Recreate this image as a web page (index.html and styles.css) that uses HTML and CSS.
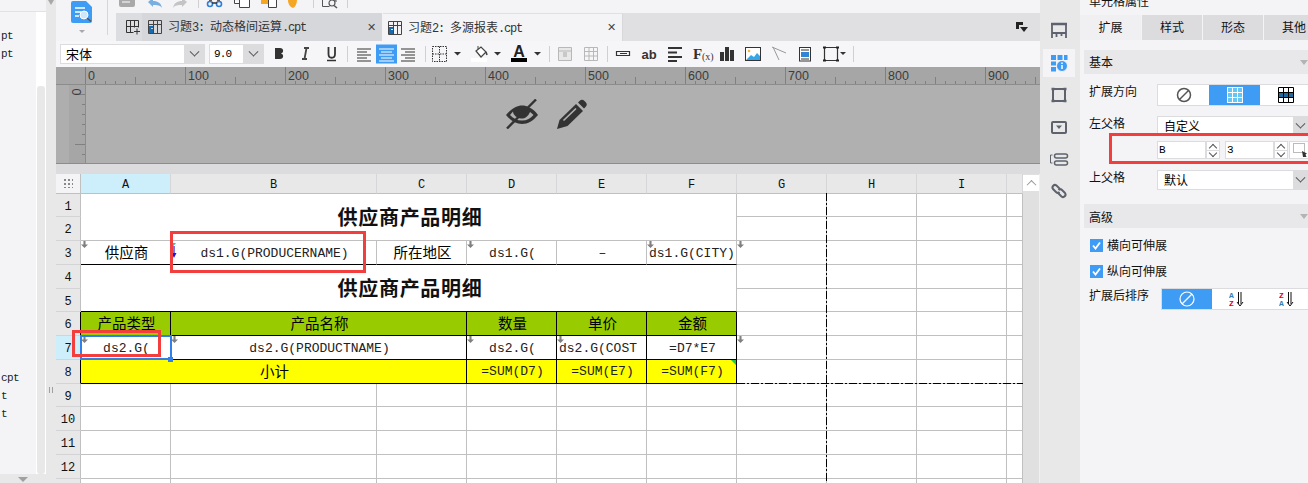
FILE: index.html
```html
<!DOCTYPE html>
<html lang="zh">
<head>
<meta charset="utf-8">
<title>报表设计器</title>
<link rel="stylesheet" href="styles.css">
</head>
<body>
<div class="app">
  <aside class="left">
    <div class="left-top"></div>
    <div class="left-body">
      <ul class="files">
        <li>pt</li><li>pt</li><li class="far">cpt</li><li>t</li><li>t</li>
      </ul>
      <div class="left-scroll"><div class="left-thumb"></div></div>
    </div>
    <div class="left-foot"><span class="tri-down"></span></div>
  </aside>
  <div class="gutter"><span class="tri-up"></span><span class="grip"></span></div>

  <main class="main">
    <header class="top">
      <div class="logo-block">
        <svg width="60" height="41" viewBox="56 0 60 41">
          <path d="M73 1h13l6 6v14a2 2 0 0 1-2 2H73a2 2 0 0 1-2-2V3a2 2 0 0 1 2-2z" fill="#3f9cf5"/>
          <path d="M75 8h10M75 12h6M75 16h4" stroke="#fff" stroke-width="1.3"/>
          <circle cx="84" cy="15" r="4" fill="#cfe6fb" stroke="#fff"/>
          <path d="M87 18l4 3.500" stroke="#555" stroke-width="1.500"/>
          <path d="M79 30h6l-3 3z" fill="#a8a8a8"/>
          <path d="M107.500 0v35" stroke="#d6d6d8"/>
        </svg>
      </div>
      <div class="top-right">
        <svg class="quick" width="300" height="13" viewBox="116 0 300 13">
          <path d="M119 0h16v5a2 2 0 0 1-2 2h-12a2 2 0 0 1-2-2z" fill="#a9a9a9"/><path d="M122 2h8" stroke="#fff"/>
          <path d="M148 2l5-4v3c5 0 8 2 9 7-2-3-5-3-9-3v2z" fill="#79aee0"/>
          <path d="M187 2l-5-4v3c-5 0-8 2-9 7 2-3 5-3 9-3v2z" fill="#c4c4c4"/>
          <path d="M198.500 0v8" stroke="#d0d0d2"/>
          <circle cx="210" cy="4" r="2.500" fill="none" stroke="#2f7ed8" stroke-width="1.600"/>
          <circle cx="219" cy="4" r="2.500" fill="none" stroke="#2f7ed8" stroke-width="1.600"/>
          <path d="M209 0h3M217 0h3M212 3h5" stroke="#333" stroke-width="1.500"/>
          <path d="M234.500 0v3.500h5M239.500 0v7.500h10V0" fill="#fff" stroke="#444"/>
          <rect x="261" y="0" width="7" height="4" fill="#f5a623"/><path d="M268.500 0v7.500h8V0" fill="#fff" stroke="#444"/>
          <path d="M288 0h9c0 4-2 7-4 8-3-1-5-4-5-8z" fill="#f5a623"/>
          <path d="M313.500 0v8" stroke="#d0d0d2"/>
          <path d="M322.500 0v6.500h7M333 0h3v2" fill="none" stroke="#555"/><circle cx="332" cy="3" r="3" fill="none" stroke="#555" stroke-width="1.200"/><path d="M334 5.500l3 2.500" stroke="#555" stroke-width="1.500"/>
          <path d="M347.500 0v8" stroke="#d0d0d2"/>
        </svg>
        <nav class="tabbar">
          <div class="tab-add">
            <svg width="16" height="16" viewBox="0 0 16 16"><path d="M1.500 1.500h12M1.500 1.500v12h7M5.500 1.500v12M9.500 1.500v7M13.500 1.500v7M1.500 7.500h12M9 12.500h6M12 9.500v6" fill="none" stroke="#333"/></svg>
          </div>
          <div class="tab tab-off">
            <svg class="tab-ico" width="14" height="14" viewBox="0 0 14 14"><path d="M.5.5h13v13H.5zM.5 4.500h13M5.500.5v13M9.500.5v13" fill="none" stroke="#444"/><path d="M1 6h4v2H3v1h2v4H1z" fill="#1769b0"/></svg>
            <span class="tab-text">习题<span class="hw">3: </span>动态格间运算<span class="hw">.cpt</span></span>
            <span class="tab-x">✕</span>
          </div>
          <div class="tab tab-on">
            <svg class="tab-ico" width="14" height="14" viewBox="0 0 14 14"><path d="M.5.5h13v13H.5zM.5 4.500h13M5.500.5v13M9.500.5v13" fill="none" stroke="#444"/><path d="M1 6h4v2H3v1h2v4H1z" fill="#1769b0"/></svg>
            <span class="tab-text">习题<span class="hw">2: </span>多源报表<span class="hw">.cpt</span></span>
            <span class="tab-x">✕</span>
          </div>
          <div class="tab-rest">
            <svg width="12" height="11" viewBox="0 0 12 11"><path d="M0 0h7v3H3v4H0z" fill="#222"/><path d="M4 5h8l-4 5z" fill="#222"/></svg>
          </div>
        </nav>
      </div>
    </header>

    <div class="format">
      <div class="combo combo-font"><span class="combo-val">宋体</span><span class="combo-arrow"><b class="chev"></b></span></div>
      <div class="combo combo-size"><span class="combo-val mono">9.0</span><span class="combo-arrow"><b class="chev"></b></span></div>
      <svg class="fmt-svg" width="90" height="26" viewBox="264 41 90 26">
        <path d="M275 48h5c4 0 4 5 1 5.500 3 .5 3 5.500-1 5.500h-5z" fill="#333"/>
        <path d="M304 48h5M302 59h5M306.500 48l-2 11" stroke="#444" stroke-width="1.800" fill="none"/>
        <path d="M328.500 47v7c0 5 6.500 5 6.500 0v-7" fill="none" stroke="#333" stroke-width="1.800"/><path d="M327 60.500h9" stroke="#333" stroke-width="1.500"/>
        <path d="M347.500 46v16" stroke="#d0d0d2"/>
      </svg>
      <svg class="fmt-svg" width="72" height="26" viewBox="354 41 72 26">
        <rect x="376" y="44.500" width="21" height="19" fill="#3f9cf5"/>
        <path d="M357 49h14M357 52h10M357 55h14M357 58h10M357 61h14" stroke="#333" stroke-width="1.100"/>
        <path d="M379 49h15M381 52h11M379 55h15M381 58h11M379 61h15" stroke="#fff" stroke-width="1.100"/>
        <path d="M401 49h14M405 52h10M401 55h14M405 58h10M401 61h14" stroke="#333" stroke-width="1.100"/>
        <path d="M425.500 46v16" stroke="#d0d0d2"/>
      </svg>
      <svg class="fmt-svg" width="434" height="26" viewBox="426 41 434 26">
        <path d="M432.500 46.500h14v15h-14zM432.500 54h14M439.500 46.500v15" fill="none" stroke="#333" stroke-dasharray="1.500 1"/>
        <path d="M454 52h7l-3.500 3.500z" fill="#333"/>
        <path d="M476 51l5-4 5 5-5 5z" fill="#fff" stroke="#444" stroke-width="1.200"/><path d="M478 49v-3" stroke="#444"/><path d="M486 52l1 3" stroke="#444" stroke-width="1.600"/>
        <rect x="471" y="58" width="16" height="4" fill="#fff"/>
        <path d="M494 52h7l-3.500 3.500z" fill="#333"/>
        <text x="519" y="57" class="svg-a">A</text><rect x="511" y="58" width="16" height="4" fill="#000"/>
        <path d="M534 52h7l-3.500 3.500z" fill="#333"/>
        <path d="M549.500 46v16" stroke="#d0d0d2"/>
        <path d="M558.500 47.500h13v13h-13z" fill="#e8e8e8" stroke="#b8b8b8"/><path d="M559 51h12" stroke="#b8b8b8"/><rect x="563" y="52" width="4" height="5" fill="#c8c8c8"/>
        <path d="M584.500 47.500h13v13h-13zM584.500 51.500h13M584.500 56h13M589 47.500v13M593.500 47.500v13" fill="none" stroke="#b8b8b8"/>
        <path d="M607.500 46v16" stroke="#d0d0d2"/>
        <path d="M616.500 51.500h13v4h-13zM620 53.500h7" fill="none" stroke="#333" stroke-width="1.200"/>
        <text x="649" y="59" class="svg-ab">ab</text>
        <path d="M668 48h14M668 52.500h9M668 57h14M668 61h9" stroke="#333" stroke-width="2"/>
        <text x="693" y="59" class="svg-f">F</text><text x="702" y="60" class="svg-x">(x)</text>
        <path d="M720 52h4v9h-4zM725 47h4v14h-4zM730 50h4v11h-4z" fill="#333"/>
        <rect x="745.500" y="47.500" width="15" height="13" fill="#fff" stroke="#333"/><path d="M746 60l5-5 3 2 3-4 3 3v4z" fill="#35a7e8"/><circle cx="749" cy="51" r="1.300" fill="#f5b942"/>
        <path d="M772 47l14 6M773 47l6 13" stroke="#999" fill="none"/>
        <rect x="799.500" y="47.500" width="11" height="13.500" fill="#fff" stroke="#333"/><path d="M801 50h8" stroke="#333"/><rect x="801" y="52" width="8" height="5" fill="#2f86d6"/><path d="M801 59h8" stroke="#333"/>
        <path d="M824.500 47.500h13v13h-13z" fill="none" stroke="#333" stroke-width="1.200"/><path d="M823 47.500h3M836 47.500h3M823 60.500h3M836 60.500h3" stroke="#222" stroke-width="2"/>
        <path d="M840 52h6l-3 3z" fill="#333"/>
        <path d="M853.500 46v16" stroke="#d0d0d2"/>
      </svg>
    </div>

    <div class="ruler">
      <div class="ruler-corner"></div>
      <div class="ruler-track">
        <span>0</span><span>100</span><span>200</span><span>300</span><span>400</span><span>500</span><span>600</span><span>700</span><span>800</span><span>900</span>
      </div>
    </div>

    <section class="design">
      <div class="design-strip"></div>
      <div class="vruler"><span class="vruler-zero">0</span></div>
      <div class="design-body">
        <svg width="33" height="30" viewBox="0 0 33 30">
          <path d="M0 16C6 9 11 6.500 16 6.500S27 9 32 16c-5 6-10 9-16 9S5 22 0 16zm4 0c3 3.500 7 5.500 12 5.500 5 0 8.500-2 11.500-5.500-1-1-2-2-3.500-3-2 5-6 7-9 6.500C11 19 7 16 7 12.500 6 13.500 5 15 4 16z" fill="#333"/>
          <path d="M1 29.500L30 .5" stroke="#333" stroke-width="2.400"/>
        </svg>
        <svg width="31" height="30" viewBox="0 0 31 30">
          <path d="M0 30l2.500-9L19 5l7 7-15.500 15z" fill="#333"/>
          <path d="M21 3.500l1.500-1.500a3.500 3.500 0 0 1 5 0l1 1a3.500 3.500 0 0 1 0 5L27 9.500z" fill="#333"/>
          <path d="M6.500 21.500L19 9.500" stroke="#b0b0b0" stroke-width="1.700"/>
        </svg>
      </div>
    </section>

    <div class="band"></div>

    <section class="sheet-wrap">
      <div class="sheet">
        <div class="corner"><span class="dots"></span></div>
        <div class="ch ch-sel">A</div><div class="ch">B</div><div class="ch">C</div><div class="ch">D</div><div class="ch">E</div><div class="ch">F</div><div class="ch">G</div><div class="ch">H</div><div class="ch">I</div><div class="ch"></div>

        <div class="rh">1</div>
        <div class="c merged-title">供应商产品明细</div>
        <div class="c"></div><div class="c"></div><div class="c"></div><div class="c"></div>
        <div class="rh">2</div>
        <div class="c"></div><div class="c"></div><div class="c"></div><div class="c"></div>

        <div class="rh">3</div>
        <div class="c btm cjk"><i class="mk"></i>供应商</div>
        <div class="c btm"><svg class="mk-blue" width="6" height="16" viewBox="0 0 6 16"><path d="M0 0h5L2.500 3z" fill="#22c8a0"/><path d="M3 3v9" stroke="#1a1ae0" stroke-width="1.200"/><path d="M.5 10h5L3 15z" fill="#1a1ae0"/></svg>ds1.G(PRODUCERNAME)</div>
        <div class="c btm cjk">所在地区</div>
        <div class="c btm"><i class="mk"></i>ds1.G(</div>
        <div class="c btm">–</div>
        <div class="c btm clip"><i class="mk"></i>ds1.G(CITY)</div>
        <div class="c"><i class="mk"></i></div><div class="c"></div><div class="c"></div><div class="c"></div>

        <div class="rh">4</div>
        <div class="c merged-title blk">供应商产品明细</div>
        <div class="c"></div><div class="c"></div><div class="c"></div><div class="c"></div>
        <div class="rh">5</div>
        <div class="c"></div><div class="c"></div><div class="c"></div><div class="c"></div>

        <div class="rh rh-b">6</div>
        <div class="c k green cjk">产品类型</div>
        <div class="c k green cjk span2">产品名称</div>
        <div class="c k green cjk">数量</div>
        <div class="c k green cjk">单价</div>
        <div class="c k green cjk">金额</div>
        <div class="c"></div><div class="c"></div><div class="c"></div><div class="c"></div>

        <div class="rh rh-b rh-sel">7</div>
        <div class="c k"><i class="mk"></i>ds2.G(</div>
        <div class="c k span2"><i class="mk"></i>ds2.G(PRODUCTNAME)</div>
        <div class="c k"><i class="mk"></i>ds2.G(</div>
        <div class="c k clip"><i class="mk"></i>ds2.G(COST</div>
        <div class="c k">=D7*E7</div>
        <div class="c"><i class="mk"></i></div><div class="c"></div><div class="c"></div><div class="c"></div>

        <div class="rh rh-b">8</div>
        <div class="c k yellow cjk span3">小计</div>
        <div class="c k yellow">=SUM(D7)</div>
        <div class="c k yellow">=SUM(E7)</div>
        <div class="c k yellow"><i class="flag"></i>=SUM(F7)</div>
        <div class="c"></div><div class="c"></div><div class="c"></div><div class="c"></div>

        <div class="rh">9</div><div class="c"></div><div class="c"></div><div class="c"></div><div class="c"></div><div class="c"></div><div class="c"></div><div class="c"></div><div class="c"></div><div class="c"></div><div class="c"></div>
        <div class="rh">10</div><div class="c"></div><div class="c"></div><div class="c"></div><div class="c"></div><div class="c"></div><div class="c"></div><div class="c"></div><div class="c"></div><div class="c"></div><div class="c"></div>
        <div class="rh">11</div><div class="c"></div><div class="c"></div><div class="c"></div><div class="c"></div><div class="c"></div><div class="c"></div><div class="c"></div><div class="c"></div><div class="c"></div><div class="c"></div>
        <div class="rh">12</div><div class="c"></div><div class="c"></div><div class="c"></div><div class="c"></div><div class="c"></div><div class="c"></div><div class="c"></div><div class="c"></div><div class="c"></div><div class="c"></div>
        <div class="rh"></div><div class="c"></div><div class="c"></div><div class="c"></div><div class="c"></div><div class="c"></div><div class="c"></div><div class="c"></div><div class="c"></div><div class="c"></div><div class="c"></div>

        <div class="page-v"></div>
        <div class="page-h"></div>
        <div class="selection"><i class="handle"></i></div>
        <div class="red red-a"></div>
        <div class="red red-b"></div>
      </div>
      <div class="vscroll"><div class="vscroll-up"><b class="chev-up"></b></div></div>
    </section>
  </main>

  <nav class="rail">
    <svg width="40" height="210" viewBox="1040 0 40 210">
      <path d="M1052 24h14v9h-14zM1052 33v5M1056.500 33v4M1061.500 33v3M1066 33v5" fill="none" stroke="#5d626e" stroke-width="1.800"/>
      <path d="M1051 24h16" stroke="#5d626e" stroke-width="2.500"/>
      <rect x="1043" y="49" width="32" height="28" fill="#f4f4f7"/>
      <g fill="#3f9cf5"><rect x="1051" y="55" width="5" height="5"/><rect x="1057.500" y="55" width="5" height="5"/><rect x="1064" y="55" width="3.500" height="5"/><rect x="1051" y="61.500" width="5" height="4"/><rect x="1051" y="67" width="5" height="4.500"/></g>
      <circle cx="1062" cy="66" r="5.500" fill="#3f9cf5" stroke="#f4f4f7"/><path d="M1062 65v4M1062 62.500v1.500" stroke="#fff" stroke-width="1.500"/>
      <path d="M1053 89h12v12h-12z" fill="none" stroke="#5d626e" stroke-width="2"/><path d="M1051.500 89h3M1063.500 89h3M1051.500 101h3M1063.500 101h3" stroke="#5d626e" stroke-width="2.500"/>
      <rect x="1052" y="122" width="14" height="11" rx="1" fill="none" stroke="#5d626e" stroke-width="2"/><path d="M1056 125.500h6l-3 3.500z" fill="#5d626e"/>
      <path d="M1052.500 155h-2v8h2" fill="none" stroke="#5d626e"/><rect x="1054.500" y="154" width="13" height="4" rx="2" fill="none" stroke="#5d626e" stroke-width="1.500"/><rect x="1054.500" y="161" width="13" height="4" rx="2" fill="none" stroke="#5d626e" stroke-width="1.500"/>
      <path d="M1060 189l-3.500-3.500a2.500 2.500 0 0 0-3.500 3.500l3 3a2.500 2.500 0 0 0 3.500 0M1058 193l3.500 3.500a2.500 2.500 0 0 0 3.500-3.500l-3-3a2.500 2.500 0 0 0-3.500 0" fill="none" stroke="#5d626e" stroke-width="2"/>
    </svg>
  </nav>

  <aside class="props">
    <div class="props-title">单元格属性</div>
    <div class="props-tabs">
      <div class="ptab ptab-on">扩展</div><div class="ptab">样式</div><div class="ptab">形态</div><div class="ptab">其他</div>
    </div>
    <div class="sec">基本<span class="sec-tri"></span></div>
    <div class="prow prow-seg">
      <label>扩展方向</label>
      <div class="seg">
        <div class="seg-item"><svg width="16" height="16" viewBox="0 0 16 16"><circle cx="8" cy="8" r="6.500" fill="none" stroke="#555" stroke-width="1.500"/><path d="M3.500 12.500l9-9" stroke="#555" stroke-width="1.500"/></svg></div>
        <div class="seg-item seg-on"><svg width="16" height="16" viewBox="0 0 16 16"><rect x=".5" y=".5" width="15" height="15" fill="#64c6f5" stroke="#fff"/><path d="M5.500 0v16M10.500 0v16M0 5.500h16M0 10.500h16" stroke="#fff"/></svg></div>
        <div class="seg-item"><svg width="16" height="16" viewBox="0 0 16 16"><rect x="1" y="5.500" width="14" height="5" fill="#1f6b9c"/><path d="M.5.500h15v15H.5zM5.500 0v16M10.500 0v16M0 5.500h16M0 10.500h16" fill="none" stroke="#000"/></svg></div>
      </div>
    </div>
    <div class="prow prow-sel">
      <label>左父格</label>
      <div class="select"><span>自定义</span><span class="select-arrow"><b class="chev"></b></span></div>
    </div>
    <div class="prow prow-in">
      <label></label>
      <div class="inputs">
        <span class="inp mono">B</span><span class="spin"><b class="s-up"></b><b class="s-dn"></b></span>
        <span class="inp inp-2 mono">3</span><span class="spin"><b class="s-up"></b><b class="s-dn"></b></span>
        <span class="pick"><svg width="17" height="15" viewBox="0 0 17 15"><rect x="3.500" y="1.500" width="11" height="9" fill="none" stroke="#777" stroke-dasharray="1 1"/><path d="M12 9l5 2.500-1.500 1 1 2.500H13z" fill="#333"/></svg></span>
      </div>
    </div>
    <div class="prow prow-up">
      <label>上父格</label>
      <div class="select"><span>默认</span><span class="select-arrow"><b class="chev"></b></span></div>
    </div>
    <div class="sec sec-2">高级<span class="sec-tri"></span></div>
    <div class="check check-1"><span class="box"><svg width="13" height="13" viewBox="0 0 13 13"><path d="M3 6.500l2.500 3L10 3.500" fill="none" stroke="#fff" stroke-width="1.800"/></svg></span><span class="check-text">横向可伸展</span></div>
    <div class="check check-2"><span class="box"><svg width="13" height="13" viewBox="0 0 13 13"><path d="M3 6.500l2.500 3L10 3.500" fill="none" stroke="#fff" stroke-width="1.800"/></svg></span><span class="check-text">纵向可伸展</span></div>
    <div class="prow prow-sort">
      <label class="lbl-long">扩展后排序</label>
      <div class="seg seg-sort">
        <div class="seg-item seg-on"><svg width="16" height="16" viewBox="0 0 16 16"><circle cx="8" cy="8" r="7" fill="none" stroke="#fff" stroke-width="1.200"/><path d="M3 13l10-10" stroke="#fff" stroke-width="1.200"/></svg></div>
        <div class="seg-item"><svg width="16" height="16" viewBox="0 0 16 16"><text x="0" y="7" class="az-a">A</text><text x="0" y="15" class="az-z">Z</text><path d="M9.500 1v12M12 1v12M8 11l3 4 3-4" fill="none" stroke="#111"/></svg></div>
        <div class="seg-item"><svg width="16" height="16" viewBox="0 0 16 16"><text x="0" y="7" class="az-z">Z</text><text x="0" y="15" class="az-a">A</text><path d="M9.500 1v12M12 1v12M8 11l3 4 3-4" fill="none" stroke="#111"/></svg></div>
      </div>
    </div>
    <div class="red red-c"></div>
  </aside>
</div>
</body>
</html>
```
FILE: styles.css
```css
* { box-sizing: border-box; }
html, body { margin: 0; padding: 0; height: 100%; overflow: hidden; background: #f4f4f7; }
body { font-family: "Noto Sans CJK SC", "Liberation Sans", sans-serif; font-size: 12px; color: #000; }
svg { display: block; }
.mono { font-family: "Liberation Mono", "Noto Sans CJK SC", monospace; }
.app { display: flex; width: 1308px; height: 483px; overflow: hidden; }

/* left file tree */
.left { width: 46px; flex: none; display: flex; flex-direction: column; background: #f4f4f7; }
.left-top { height: 12px; flex: none; border-bottom: 1px solid #e2e2e4; }
.left-body { flex: 1; display: flex; min-height: 0; }
.files { flex: 1; list-style: none; margin: 0; padding: 15px 0 0 1px; font: 11px/18px "Liberation Mono", monospace; letter-spacing: -.6px; color: #222; }
.files li { height: 18px; }
.files .far { margin-top: 306px; }
.left-scroll { width: 10px; flex: none; background: #fff; padding: 74px 1px 0 1px; }
.left-thumb { height: 388px; background: #e8e8e8; border-radius: 3px; }
.left-foot { height: 9px; flex: none; background: #e8e8e8; display: flex; justify-content: center; padding-top: 3px; }
.tri-down { width: 0; height: 0; border: 5px solid transparent; border-top: 5px solid #a0a0a0; border-bottom: 0; }
.gutter { width: 10px; flex: none; background: #e8e8e8; display: flex; flex-direction: column; align-items: center; }
.tri-up { width: 6px; height: 5px; background: #a8a8a8; clip-path: polygon(0 0, 100% 0, 50% 100%); }
.grip { width: 4px; height: 6px; margin-top: 382px; border-left: 1px solid #a0a0a0; border-right: 1px solid #a0a0a0; }

/* main */
.main { width: 984px; flex: none; display: flex; flex-direction: column; background: #f4f4f7; }
.top { display: flex; height: 41px; flex: none; }
.logo-block { width: 60px; flex: none; }
.top-right { flex: 1; display: flex; flex-direction: column; min-width: 0; }
.quick { height: 13px; flex: none; }
.tabbar { height: 28px; flex: none; display: flex; background: #e0e0e2; }
.tab-add { width: 26px; flex: none; background: #dcdde1; padding: 6px 0 0 9px; }
.tab { width: 240px; flex: none; display: flex; align-items: center; font: 12px/1 "Noto Sans CJK SC", sans-serif; color: #333; }
.tab-off { background: #d6d7db; padding-left: 6px; border-right: 1px solid #f4f4f7; width: 241px; }
.tab-on { background: #f4f4f7; padding-left: 5px; border-top: 1px solid #e0e0e2; border-right: 1px solid #d8d8da; }
.tab-ico { flex: none; }
.tab-text { margin-left: 6px; flex: 1; white-space: pre; }
.hw { font-family: "Liberation Mono", monospace; letter-spacing: -1.200px; }
.tab-x { width: 11px; font: 11px/1 "DejaVu Sans", sans-serif; color: #444; margin-right: 5px; text-align: center; }
.tab-rest { flex: 1; display: flex; justify-content: flex-end; padding: 9px 12px 0 0; }

/* format bar */
.format { height: 26px; flex: none; display: flex; align-items: flex-start; padding-left: 4px; background: #f6f6f9; }
.fmt-svg { flex: none; }
.combo { height: 20px; margin-top: 3px; display: flex; background: #fff; border: 1px solid #dcdcdf; flex: none; }
.combo-font { width: 145px; font-size: 13px; }
.combo-size { width: 55px; margin-left: 4px; }
.combo-size .combo-val { font-size: 11px; letter-spacing: -.8px; padding-left: 4px; }
.combo-val { flex: 1; padding-left: 5px; line-height: 18px; color: #000; }
.combo-arrow { width: 20px; background: #dcdcdf; display: flex; align-items: center; justify-content: center; }
.chev { display: block; width: 7px; height: 7px; border-right: 1px solid #555; border-bottom: 1px solid #555; transform: rotate(45deg) translate(-2px, -2px); }

/* ruler */
.ruler { height: 18px; flex: none; display: flex; background: #a6a6a6; border-bottom: 1px solid #8c8c8c; }
.ruler-corner { width: 29px; flex: none; }
.ruler-track { flex: 1; display: flex; overflow: hidden; font: 12.5px/18px "Liberation Sans", sans-serif; color: #3c3c3c;
  background:
    repeating-linear-gradient(90deg, #808080 0 1px, transparent 1px 100px) 0 0 / 100% 100% no-repeat,
    repeating-linear-gradient(90deg, #808080 0 1px, transparent 1px 50px) 0 100% / 100% 7px no-repeat,
    repeating-linear-gradient(90deg, #808080 0 1px, transparent 1px 10px) 0 100% / 100% 3px no-repeat;
}
.ruler-track span { width: 100px; flex: none; padding-left: 3px; }

.design { height: 79px; flex: none; display: flex; background: #b0b0b0; border-bottom: 1px solid #8c8c8c; }
.design-strip { width: 13px; flex: none; background: #aeaeae; }
.vruler { width: 17px; flex: none; position: relative; border-right: 1px solid #8c8c8c; background-color: #a6a6a6;
  background-image:
    repeating-linear-gradient(180deg, #808080 0 1px, transparent 1px 50px),
    repeating-linear-gradient(180deg, #808080 0 1px, transparent 1px 10px);
  background-size: 10px 100%, 3px 100%;
  background-position: right 0 top 9px, right 0 top 9px;
  background-repeat: no-repeat;
}
.vruler-zero { display: block; transform: rotate(90deg); width: 14px; font: 12.500px/10px "Liberation Sans", sans-serif; color: #3c3c3c; text-align: center; margin: 2px 0 0 0; }
.design-body { flex: 1; display: flex; gap: 18px; padding: 14px 0 0 420px; }
.band { height: 10px; flex: none; background: #dcdcde; }

/* sheet */
.sheet-wrap { flex: 1; min-height: 0; display: flex; overflow: hidden; border-right: 1px solid #f0f0f2; }
.sheet { position: relative; width: 967px; flex: none; display: grid;
  grid-template-columns: 25px 90px 206px 90px 90px 90px 90px 90px 90px 90px 16px;
  grid-template-rows: 20px 23px 24px 24px 24px 23px 24px 24px 24px 23px 24px 24px 24px 24px;
  background: #fff; font: 13px/1 "Liberation Mono", "Noto Sans CJK SC", monospace; color: #222; align-content: start; overflow: hidden;
}
.corner { background: #f4f4f7; border-right: 1px solid #c0c0c0; border-bottom: 1px solid #c0c0c0; display: flex; align-items: center; justify-content: center; }
.dots { width: 9px; height: 9px; background: repeating-linear-gradient(90deg, #888 0 2px, transparent 2px 4px); -webkit-mask: repeating-linear-gradient(180deg, #000 0 2px, transparent 2px 4px); mask: repeating-linear-gradient(180deg, #000 0 2px, transparent 2px 4px); }
.ch { background: #e8e8e8; border-right: 1px solid #d6d6d8; border-bottom: 1px solid #c0c0c0; display: flex; align-items: center; justify-content: center; font: 12px/1 "Liberation Mono", monospace; color: #111; padding-top: 3px; }
.ch-sel { background: #cdeefb; }
.rh { background: #e8e8e8; border-right: 1px solid #c0c0c0; border-bottom: 1px solid #d4d4d6; display: flex; align-items: center; justify-content: center; font: 12px/1 "Liberation Mono", monospace; color: #111; padding-top: 3px; }
.rh-b { border-right-color: #000; }
.rh-sel { background: #cdeefb; }
.c { position: relative; border-right: 1px solid #c0c0c0; border-bottom: 1px solid #c0c0c0; display: flex; align-items: center; justify-content: center; white-space: nowrap; overflow: hidden; min-width: 0; padding: 1px 0 0 2px; }
.cjk { font-size: 14.500px; color: #000; font-family: "Noto Sans CJK SC", sans-serif; padding-top: 0; }
.clip { justify-content: flex-start; padding-left: 2px; }
.btm { border-bottom-color: #000; }
.k { border-color: #000; }
.green { background: #99cc00; padding-top: 0; }
.yellow { background: #ffff00; padding-top: 0; }
.span2 { grid-column: span 2; }
.span3 { grid-column: span 3; }
.merged-title { grid-column: span 6; grid-row: span 2; font: bold 20px/1 "Noto Sans CJK SC", sans-serif; letter-spacing: .7px; color: #111; padding: 0 0 0 3px; }
.blk { border-bottom-color: #000; }
.mk { position: absolute; left: 0; top: 0; width: 7px; height: 7px; background: #808080; clip-path: polygon(35% 0, 65% 0, 65% 50%, 100% 50%, 50% 100%, 0 50%, 35% 50%); }
.mk-blue { position: absolute; left: 0; top: 2px; }
.flag { position: absolute; right: 0; top: 0; width: 5px; height: 5px; background: #22c840; clip-path: polygon(0 0, 100% 0, 100% 100%); }
.page-v { position: absolute; left: 770px; top: 19px; bottom: 0; width: 1px; background: repeating-linear-gradient(180deg, #000 0 8px, transparent 8px 10px, #000 10px 12px, transparent 12px 14px); }
.page-h { position: absolute; left: 681px; right: 0; top: 209px; height: 1px; background: repeating-linear-gradient(90deg, #000 0 8px, transparent 8px 10px, #000 10px 12px, transparent 12px 14px); }
.selection { position: absolute; left: 24px; top: 161px; width: 92px; height: 25px; border: 2px solid #2f80ed; }
.handle { position: absolute; right: -3px; bottom: -4px; width: 5px; height: 5px; background: #2f80ed; }
.red { position: absolute; border: 3px solid #f33e3e; pointer-events: none; }
.red-a { left: 114px; top: 57px; width: 196px; height: 42px; }
.red-b { left: 16px; top: 156px; width: 89px; height: 27px; }
.vscroll { width: 16px; flex: none; background: #e0e0e0; }
.vscroll-up { height: 16px; background: #fff; display: flex; align-items: center; justify-content: center; margin-top: 1px; }
.chev-up { display: block; width: 7px; height: 7px; border-left: 1px solid #999; border-top: 1px solid #999; transform: rotate(45deg) translate(1px, 1px); }

/* rail */
.rail { width: 40px; flex: none; background: #e8e8e8; }

/* properties */
.props { position: relative; flex: 1; min-width: 0; overflow: hidden; background: #f4f4f7; }
.props-title { height: 15px; padding-left: 9px; line-height: 2px; font-size: 12px; color: #111; white-space: nowrap; }
.props-tabs { height: 25px; display: flex; gap: 1px; }
.ptab { width: 60px; flex: none; background: #dcdcdf; text-align: center; line-height: 24px; font-size: 12px; color: #111; }
.ptab-on { width: 61px; background: #f0f0f3; }
.sec { margin: 10px 0 0 4px; height: 24px; background: #e8e8ea; padding-left: 5px; line-height: 23px; font-size: 12px; color: #111; position: relative; }
.sec-2 { margin-top: 14px; line-height: 25px; }
.sec-tri { position: absolute; right: 0; top: 10px; width: 8px; height: 5px; background: #b4b4b4; clip-path: polygon(0 0, 100% 0, 50% 100%); }
.prow { display: flex; padding-left: 9px; align-items: flex-start; white-space: nowrap; }
.prow label { width: 68px; flex: none; font-size: 12px; line-height: 14px; color: #111; }
.prow-seg { margin-top: 10px; }
.prow-sel { margin-top: 10px; }
.prow-in { margin-top: 5px; }
.prow-up { margin-top: 11px; }
.prow-sort { margin-top: 10px; }
.prow .lbl-long { width: 72px; }
.seg { flex: 1; height: 22px; display: flex; border: 1px solid #dcdcdf; background: #fff; }
.seg-item { width: 51px; flex: none; display: flex; align-items: center; justify-content: center; }
.seg-on { background: #3f9cf5; }
.seg-sort .seg-item { width: 50px; }
.az-a { font: bold 8px "Liberation Mono", monospace; fill: #2f7fb5; }
.az-z { font: bold 8px "Liberation Mono", monospace; fill: #e60000; }
.select { flex: 1; height: 20px; display: flex; background: #fff; border: 1px solid #dcdcdf; font-size: 12px; line-height: 18px; }
.select span:first-child { flex: 1; padding-left: 6px; }
.select-arrow { width: 14px; background: #dcdcdf; display: flex; align-items: center; justify-content: center; flex: none; }
.inputs { flex: 1; height: 18px; display: flex; }
.inp { width: 49px; flex: none; background: #fff; border: 1px solid #dcdcdf; font-size: 11px; line-height: 16px; padding-left: 1px; }
.inp-2 { margin-left: 5px; }
.spin { width: 14px; flex: none; display: flex; flex-direction: column; background: #fff; border: 1px solid #dcdcdf; }
.s-up, .s-dn { flex: 1; display: block; position: relative; }
.s-up { border-bottom: 1px solid #dcdcdf; }
.s-up::after { content: ""; position: absolute; left: 3px; top: 3px; width: 5px; height: 5px; border-left: 1px solid #555; border-top: 1px solid #555; transform: rotate(45deg); }
.s-dn::after { content: ""; position: absolute; left: 3px; top: -1px; width: 5px; height: 5px; border-right: 1px solid #555; border-bottom: 1px solid #555; transform: rotate(45deg); }
.pick { margin-left: 1px; width: 20px; flex: none; background: #fff; border: 1px solid #dcdcdf; overflow: hidden; }
.check { display: flex; align-items: center; height: 14px; padding-left: 10px; font-size: 12px; color: #111; white-space: nowrap; }
.check-text { line-height: 12px; }
.check-1 { margin-top: 10px; }
.check-2 { margin-top: 12px; }
.box { width: 13px; height: 13px; background: #3f9cf5; margin-right: 4px; flex: none; }
.red-c { left: 29px; top: 133px; width: 210px; height: 31px; }

/* svg text */
.svg-a { font: bold 16px "Liberation Sans", sans-serif; fill: #222; text-anchor: middle; }
.svg-ab { font: bold 13px "Liberation Sans", sans-serif; fill: #333; text-anchor: middle; }
.svg-f { font: bold 15px "Liberation Serif", serif; fill: #333; }
.svg-x { font: 10px "Liberation Serif", serif; fill: #333; }
```
